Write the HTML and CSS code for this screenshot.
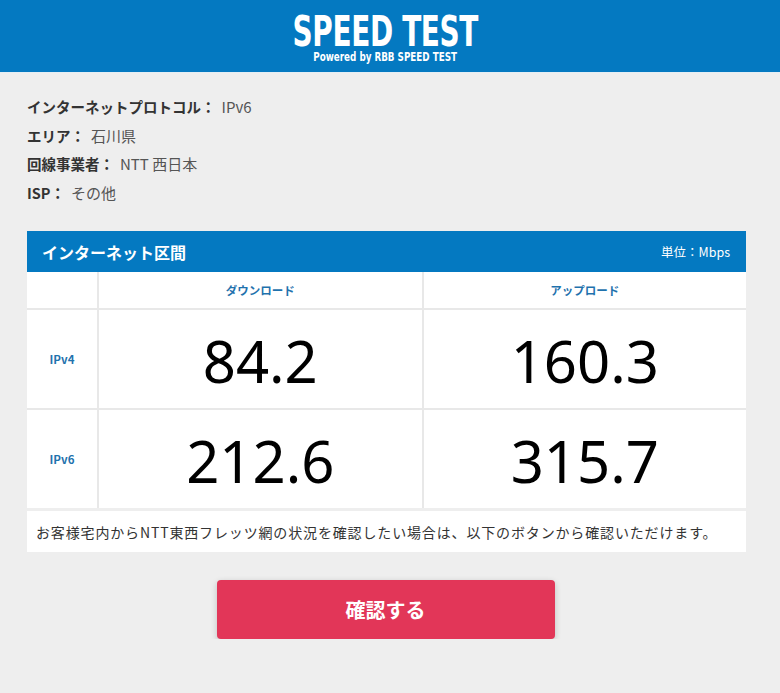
FILE: index.html
```html
<!DOCTYPE html>
<html lang="ja">
<head>
  <meta charset="utf-8">
  <title>SPEED TEST | Powered by RBB SPEED TEST</title>
  <meta content="width=device-width, initial-scale=1" name="viewport">
  <link rel="stylesheet" href="styles.css">
</head>
<body>
  <!-- Header -->
  <header class="site-header">
    <div class="logo">
      <span class="logo-title">SPEED TEST</span>
      <span class="logo-sub">Powered by RBB SPEED TEST</span>
    </div>
  </header>

  <main class="container">
    <ul class="info-list">
      <li><span class="info-label">インターネットプロトコル：</span>IPv6</li>
      <li><span class="info-label">エリア：</span>石川県</li>
      <li><span class="info-label">回線事業者：</span>NTT 西日本</li>
      <li><span class="info-label">ISP：</span>その他</li>
    </ul>

    <section class="result">
      <div class="result-head">
        <h2 class="result-title">インターネット区間</h2>
        <span class="result-unit">単位：Mbps</span>
      </div>
      <div class="result-grid">
        <div class="cell"></div>
        <div class="cell col-label">ダウンロード</div>
        <div class="cell col-label">アップロード</div>

        <div class="cell row-label">IPv4</div>
        <div class="cell value">84.2</div>
        <div class="cell value">160.3</div>

        <div class="cell row-label">IPv6</div>
        <div class="cell value">212.6</div>
        <div class="cell value">315.7</div>
      </div>
      <p class="result-note">お客様宅内からNTT東西フレッツ網の状況を確認したい場合は、以下のボタンから確認いただけます。</p>
    </section>

    <div class="action">
      <a href="#" class="btn-check">確認する</a>
    </div>
  </main>
</body>
</html>
```

FILE: styles.css
```css
:root {
  --brand-blue: #0479c1;
  --label-blue: #1f72ad;
  --bg-body: #eeeeee;
  --line-color: #e8e8e8;
  --text-color: #333333;
  --value-color: #555555;
  --btn-red: #e23658;
}

* {
  box-sizing: border-box;
}

body {
  margin: 0;
  background-color: var(--bg-body);
  color: var(--text-color);
  font-family: "Noto Sans CJK JP", "Noto Sans", sans-serif;
}

/* Header */
.site-header {
  height: 73px;
  padding-right: 9px;
  background-color: var(--brand-blue);
  border-bottom: 1px solid #e4eef4;
  display: flex;
  justify-content: center;
  align-items: center;
}

.logo {
  display: flex;
  flex-direction: column;
  align-items: center;
  color: #ffffff;
  font-family: "DejaVu Sans", sans-serif;
  font-weight: bold;
  font-stretch: condensed;
  padding-top: 5px;
}

.logo-title {
  font-size: 42px;
  line-height: 36px;
  letter-spacing: -0.5px;
  transform: scaleX(0.74);
}

.logo-sub {
  font-size: 12.5px;
  line-height: 13px;
  transform: scaleX(0.78);
}

/* Content */
.container {
  width: 719px;
  margin-left: 27px;
}

.info-list {
  list-style: none;
  margin: 20px 0 0;
  padding: 0;
  font-size: 15px;
  line-height: 28.6px;
  color: var(--value-color);
}

.info-label {
  font-size: 14.5px;
  font-weight: bold;
  color: var(--text-color);
  margin-right: 6px;
}

.result {
  margin-top: 24px;
}

.result-head {
  height: 41px;
  background-color: var(--brand-blue);
  color: #ffffff;
  display: flex;
  align-items: center;
  justify-content: space-between;
  padding: 0 16px 0 15px;
}

.result-title {
  margin: 0;
  font-size: 16px;
  font-weight: bold;
}

.result-unit {
  font-size: 12.5px;
}

.result-grid {
  display: grid;
  grid-template-columns: 70px 1fr 1fr;
  grid-template-rows: 36px 98px 98px;
  gap: 2px;
  background-color: var(--line-color);
}

.cell {
  background-color: #ffffff;
  display: flex;
  align-items: center;
  justify-content: center;
}

.col-label,
.row-label {
  color: var(--label-blue);
  font-size: 11.5px;
  font-weight: bold;
}

.value {
  font-family: "Noto Sans", sans-serif;
  font-size: 58px;
  color: #000000;
  padding-top: 2px;
}

.result-note {
  margin: 3px 0 0;
  height: 41px;
  background-color: #ffffff;
  padding: 0 9px;
  display: flex;
  align-items: center;
  font-size: 14px;
  letter-spacing: 0.85px;
}

.action {
  display: flex;
  justify-content: center;
  margin-top: 28px;
  padding-right: 2px;
}

.btn-check {
  display: flex;
  align-items: center;
  justify-content: center;
  width: 338px;
  height: 59px;
  background-color: var(--btn-red);
  color: #ffffff;
  font-size: 20px;
  font-weight: bold;
  text-decoration: none;
  border-radius: 4px;
  box-shadow: 0 2px 6px rgba(0, 0, 0, 0.2);
}
```
